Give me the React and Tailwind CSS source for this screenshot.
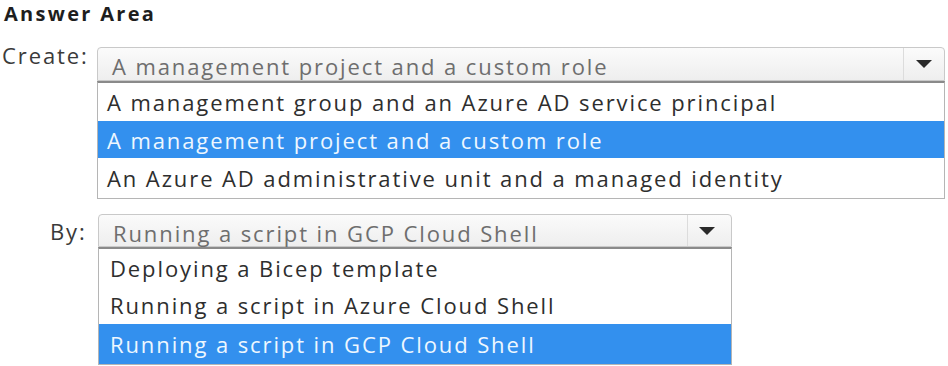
import { useState } from "react";

const createOptions = [
  "A management group and an Azure AD service principal",
  "A management project and a custom role",
  "An Azure AD administrative unit and a managed identity",
];

const byOptions = [
  "Deploying a Bicep template",
  "Running a script in Azure Cloud Shell",
  "Running a script in GCP Cloud Shell",
];

function Caret() {
  return (
    <svg width="18" height="10" viewBox="0 0 18 10">
      <path d="M1 1 L17 1 L9 9 Z" fill="#2a2a2a" />
    </svg>
  );
}

function OpenSelect({ value, options, selected, width, rowHeights, boxHeight, arrowWidth, pad }) {
  return (
    <div className={width}>
      <div
        className={`flex ${boxHeight} rounded-t-[4px] border border-[#c9c9c9] bg-gradient-to-b from-[#fbfbfb] to-[#eeeeee]`}
      >
        <div className="flex-1 whitespace-nowrap pl-[14px] pt-[3px] text-[#6e6e6e]">{value}</div>
        <div className={`flex h-full ${arrowWidth} items-center justify-center border-l border-[#dcdcdc]`}>
          <Caret />
        </div>
      </div>
      <div className="border border-t-2 border-[#b5b5b5] border-t-[#8a8a8a] bg-white">
        {options.map((o, i) => (
          <div
            key={o}
            className={`flex ${rowHeights[i]} items-center whitespace-nowrap ${pad} ${
              i === selected ? "bg-[#3390ee] text-[#eef7ff]" : "text-[#2e2e2e]"
            }`}
          >
            {o}
          </div>
        ))}
      </div>
    </div>
  );
}

export default function App() {
  const [createSel] = useState(1);
  const [bySel] = useState(2);

  return (
    <div
      className="h-[366px] w-[948px] overflow-hidden bg-white text-[22px] leading-[30px] tracking-[1.9px]"
      style={{ fontFamily: '"Open Sans", sans-serif' }}
    >
      <div className="pl-[4px] text-[20px] font-bold leading-[28px] tracking-[2.3px] text-[#1e1e1e]">Answer Area</div>

      <div className="mt-[19px] flex">
        <div className="-mt-[7px] w-[97px] pl-[2px] text-[#3a3a3a]">Create:</div>
        <OpenSelect
          value={createOptions[createSel]}
          options={createOptions}
          selected={createSel}
          width="w-[848px]"
          boxHeight="h-[34px]"
          arrowWidth="w-[41px]"
          pad="pl-[9px]"
          rowHeights={["h-[38px]", "h-[37px]", "h-[40px]"]}
        />
      </div>

      <div className="mt-[15px] flex">
        <div className="w-[98px] pl-[50px] pt-[2px] text-[#3a3a3a]">By:</div>
        <OpenSelect
          value={byOptions[bySel]}
          options={byOptions}
          selected={bySel}
          width="w-[634px]"
          boxHeight="h-[33px]"
          arrowWidth="w-[44px] pr-[5px]"
          pad="pl-[11px]"
          rowHeights={["h-[37px]", "h-[38px]", "h-[40px]"]}
        />
      </div>
    </div>
  );
}
